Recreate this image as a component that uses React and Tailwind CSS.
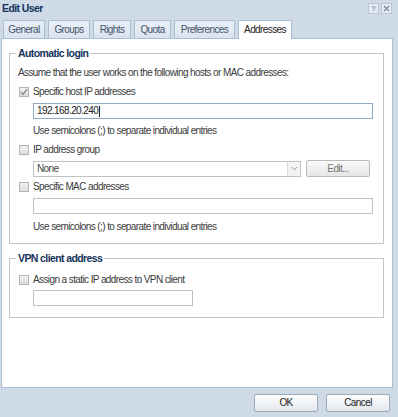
import React from "react";

// Small check mark used by the ticked checkbox
const Check = () => (
  <svg width="8" height="8" viewBox="0 0 8 8" className="block">
    <path d="M1 4.2 L3 6.4 L7 1.2" fill="none" stroke="#8a8a8a" strokeWidth="1.4" />
  </svg>
);

const CheckRow = ({ checked, label, className = "" }) => (
  <div className={`flex items-center h-[12px] leading-[12px] ${className}`}>
    <span className="w-[10px] h-[10px] border border-[#b3b3b3] bg-gradient-to-b from-[#f2f2f2] to-[#dcdcdc] flex items-center justify-center">
      {checked && <Check />}
    </span>
    <span className="ml-[4px]">{label}</span>
  </div>
);

const tabs = [
  { name: "General", w: "w-[42px]" },
  { name: "Groups", w: "w-[42px]" },
  { name: "Rights", w: "w-[38px]" },
  { name: "Quota", w: "w-[37px]" },
  { name: "Preferences", w: "w-[61px]" },
  { name: "Addresses", w: "w-[54px]", active: true },
];

const legendCls = "ml-[6px] px-[2px] font-bold text-[10.5px] tracking-[-0.6px] leading-[12px] text-[#15325b]";

export default function App() {
  return (
    <div className="w-[398px] h-[417px] bg-[#cfdae7] flex flex-col font-['Liberation_Sans',Arial,sans-serif] text-[10px] tracking-[-0.6px] text-[#3a3a3a] overflow-hidden">
      {/* Title bar */}
      <div className="h-[20px] flex items-start justify-between pl-[2px] pr-[6px] pt-[1px]">
        <span className="font-bold text-[10.5px] tracking-[-0.6px] leading-[14px] text-[#15325b]">Edit User</span>
        <div className="flex gap-[2px] mt-[2px]">
          <span className="w-[11px] h-[11px] border border-[#b8c6d6] bg-[#e4ebf3] flex items-center justify-center text-[8px] tracking-[0px] leading-none font-bold text-[#8c99a8]">?</span>
          <span className="w-[11px] h-[11px] border border-[#b8c6d6] bg-[#e4ebf3] flex items-center justify-center">
            <svg width="7" height="7" viewBox="0 0 7 7">
              <path d="M1 1 L6 6 M6 1 L1 6" stroke="#7d8a99" strokeWidth="1.2" />
            </svg>
          </span>
        </div>
      </div>

      {/* Tabs */}
      <div className="h-[18px] flex items-end gap-[3px] pl-[3px]">
        {tabs.map((t) => (
          <div
            key={t.name}
            className={`${t.w} flex items-center justify-center border border-b-0 rounded-t-[2px] leading-[12px] ${
              t.active
                ? "h-[19px] -mb-[1px] bg-white border-[#a9bdd4] text-[#222] relative z-10"
                : "h-[18px] bg-gradient-to-b from-[#eaf0f7] to-[#d9e3ef] border-[#a9bdd4] text-[#44546a]"
            }`}
          >
            {t.name}
          </div>
        ))}
      </div>

      {/* Panel */}
      <div className="ml-[1px] w-[392px] h-[350px] bg-white border border-[#a9bdd4]">
        <fieldset className="ml-[7px] mt-[8px] w-[375px] border border-[#c4c4c4]">
          <legend className={legendCls}>Automatic login</legend>
          <div className="pl-[8px] pt-[8px] pb-[10px] leading-[12px]">
            <div>Assume that the user works on the following hosts or MAC addresses:</div>
            <CheckRow checked label="Specific host IP addresses" className="mt-[7px] ml-[1px]" />
            <div className="mt-[5px] ml-[15px] w-[340px] h-[16px] border border-[#8fa8c3] bg-[#fbfdff] flex items-center pl-[3px] text-[#222]">
              192.168.20.240
              <span className="w-px h-[11px] bg-[#222] ml-px" />
            </div>
            <div className="mt-[6px] ml-[15px]">Use semicolons (;) to separate individual entries</div>
            <CheckRow label="IP address group" className="mt-[7px] ml-[1px]" />
            <div className="mt-[4px] ml-[15px] flex items-center gap-[5px]">
              <div className="w-[268px] h-[16px] border border-[#c2c2c2] flex">
                <span className="flex-1 pl-[3px] flex items-center text-[#444]">None</span>
                <span className="w-[13px] border-l border-[#dcdcdc] bg-[#f3f3f3] flex items-center justify-center">
                  <svg width="7" height="5" viewBox="0 0 7 5">
                    <path d="M1 1 L3.5 4 L6 1" fill="none" stroke="#9a9a9a" strokeWidth="1" />
                  </svg>
                </span>
              </div>
              <div className="w-[64px] h-[17px] border border-[#b9b9b9] rounded-[2px] bg-gradient-to-b from-[#fafafa] to-[#e6e6e6] flex items-center justify-center text-[#777]">
                Edit...
              </div>
            </div>
            <CheckRow label="Specific MAC addresses" className="mt-[4px] ml-[1px]" />
            <div className="mt-[5px] ml-[15px] w-[340px] h-[16px] border border-[#c2c2c2] bg-white" />
            <div className="mt-[7px] ml-[15px]">Use semicolons (;) to separate individual entries</div>
          </div>
        </fieldset>

        <fieldset className="ml-[7px] mt-[8px] w-[375px] border border-[#c4c4c4]">
          <legend className={legendCls}>VPN client address</legend>
          <div className="pl-[8px] pt-[10px] pb-[11px] leading-[12px]">
            <CheckRow label="Assign a static IP address to VPN client" className="ml-[1px]" />
            <div className="mt-[4px] ml-[15px] w-[160px] h-[16px] border border-[#c2c2c2] bg-white" />
          </div>
        </fieldset>
      </div>

      {/* Footer buttons */}
      <div className="flex-1 flex items-center justify-end gap-[8px] pr-[8px]">
        {["OK", "Cancel"].map((b) => (
          <div
            key={b}
            className="w-[64px] h-[18px] border border-[#9eaab8] rounded-[2px] bg-gradient-to-b from-[#fdfdfd] to-[#e4e8ee] flex items-center justify-center text-[#222]"
          >
            {b}
          </div>
        ))}
      </div>
    </div>
  );
}
